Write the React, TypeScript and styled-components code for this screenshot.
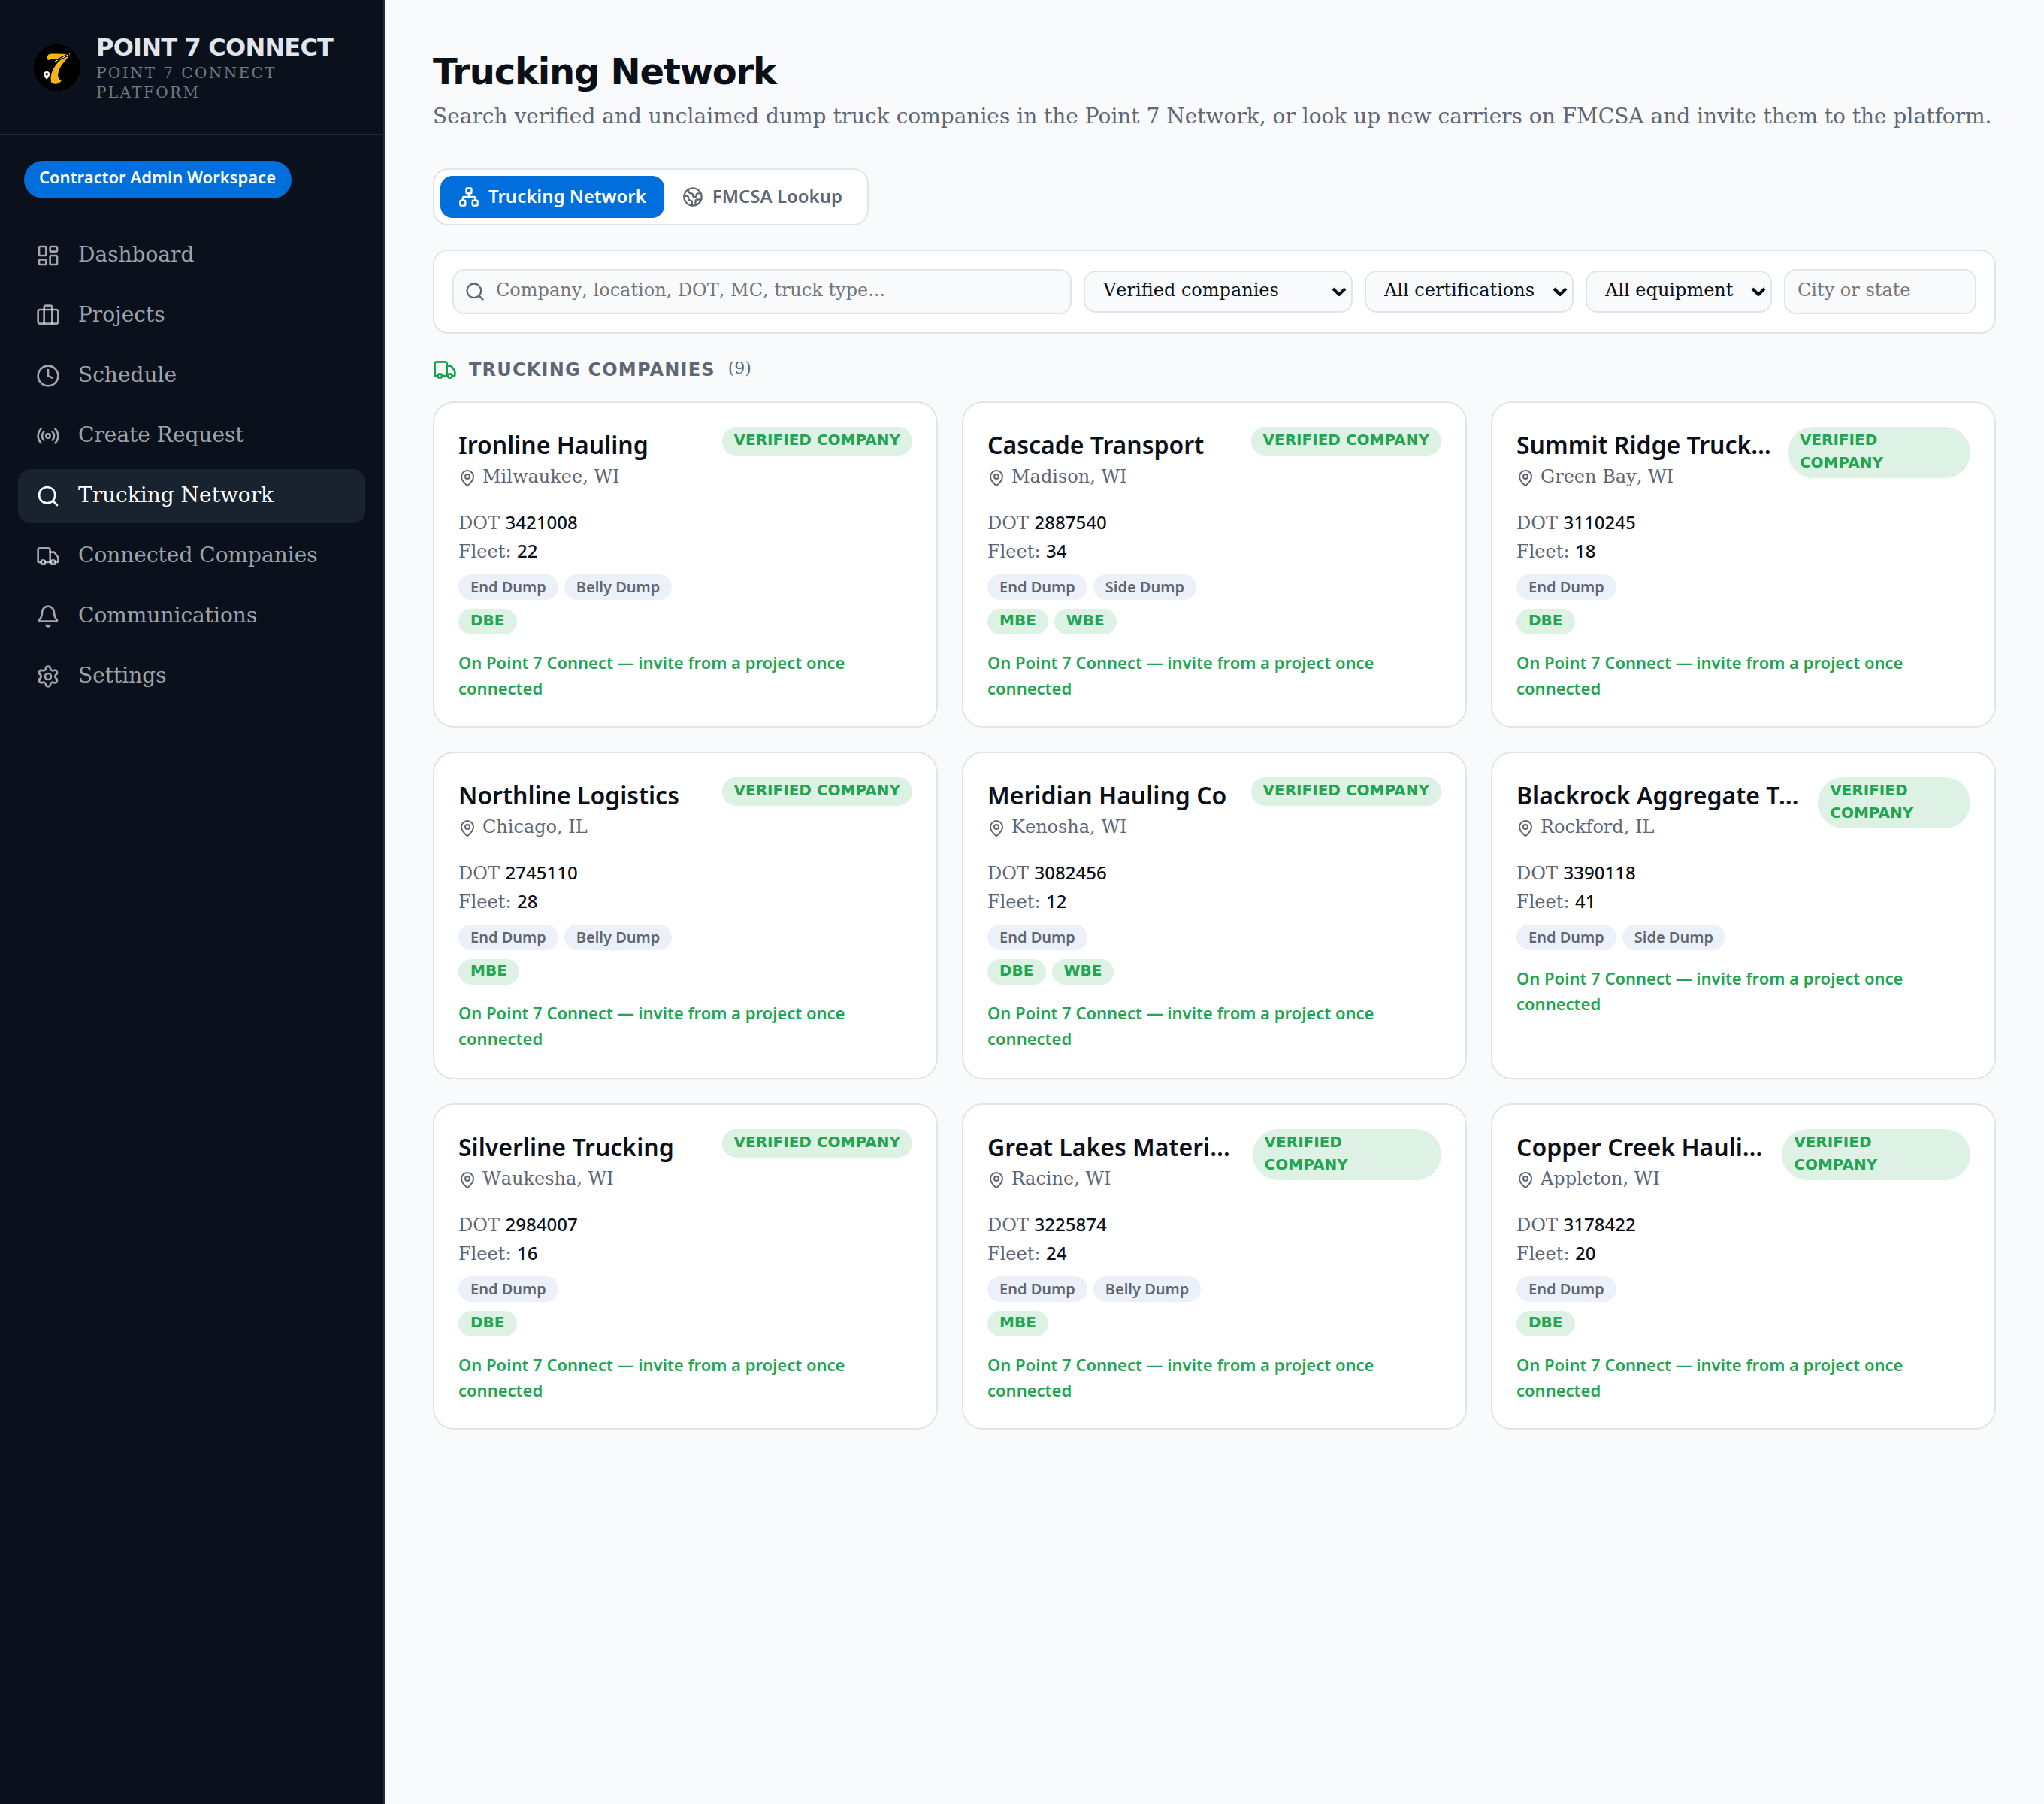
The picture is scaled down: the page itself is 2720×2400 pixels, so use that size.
import {FC} from "react";
import styled, {createGlobalStyle, css} from "styled-components";
import {
  Bell,
  Briefcase,
  Clock,
  Earth,
  LayoutDashboard,
  LucideIcon,
  MapPin,
  Network,
  Radio,
  Search,
  Settings,
  Truck,
} from "lucide-react";

interface Company {
  name: string;
  location: string;
  dot: string;
  fleet: number;
  equipment: string[];
  certifications: string[];
}

const navItems: { label: string; icon: LucideIcon }[] = [
  {label: 'Dashboard', icon: LayoutDashboard},
  {label: 'Projects', icon: Briefcase},
  {label: 'Schedule', icon: Clock},
  {label: 'Create Request', icon: Radio},
  {label: 'Trucking Network', icon: Search},
  {label: 'Connected Companies', icon: Truck},
  {label: 'Communications', icon: Bell},
  {label: 'Settings', icon: Settings},
];

const companies: Company[] = [
  {name: 'Ironline Hauling', location: 'Milwaukee, WI', dot: '3421008', fleet: 22, equipment: ['End Dump', 'Belly Dump'], certifications: ['DBE']},
  {name: 'Cascade Transport', location: 'Madison, WI', dot: '2887540', fleet: 34, equipment: ['End Dump', 'Side Dump'], certifications: ['MBE', 'WBE']},
  {name: 'Summit Ridge Trucking', location: 'Green Bay, WI', dot: '3110245', fleet: 18, equipment: ['End Dump'], certifications: ['DBE']},
  {name: 'Northline Logistics', location: 'Chicago, IL', dot: '2745110', fleet: 28, equipment: ['End Dump', 'Belly Dump'], certifications: ['MBE']},
  {name: 'Meridian Hauling Co', location: 'Kenosha, WI', dot: '3082456', fleet: 12, equipment: ['End Dump'], certifications: ['DBE', 'WBE']},
  {name: 'Blackrock Aggregate Transports', location: 'Rockford, IL', dot: '3390118', fleet: 41, equipment: ['End Dump', 'Side Dump'], certifications: []},
  {name: 'Silverline Trucking', location: 'Waukesha, WI', dot: '2984007', fleet: 16, equipment: ['End Dump'], certifications: ['DBE']},
  {name: 'Great Lakes Materials', location: 'Racine, WI', dot: '3225874', fleet: 24, equipment: ['End Dump', 'Belly Dump'], certifications: ['MBE']},
  {name: 'Copper Creek Hauling', location: 'Appleton, WI', dot: '3178422', fleet: 20, equipment: ['End Dump'], certifications: ['DBE']},
];

const Logo: FC = () => (
  <LogoSvg viewBox="0 0 72 72">
    <circle cx="36" cy="36" r="31" fill="#000"/>
    <path d="M25.500 18 C34 16.500 46 19 53.300 17.300 C52 21 49.500 23.500 46 27.700 C42 32 40 35.500 38.700 39.300 C36.500 45 36 50 41.700 53.300 C39.500 57 36 58 33 57.700 C29.500 57.500 28 56.500 27.800 53 C27.300 46 29 41 32 36 C34.500 31.500 39 27 43 23.300 C38 24.500 30 24 24.500 26 C22 25 22 19.500 25.500 18 Z" fill="#f2b619"/>
    <path d="M32 28.200 L52 18.300" stroke="#000" strokeWidth="3.200"/>
    <path d="M33.300 27.700 L51 18.800" stroke="#fff" strokeWidth="1.100" strokeDasharray="3.800 1.800"/>
    <path d="M22.200 41 a3.900 3.900 0 0 1 3.900 3.900 c0 2.900 -3.900 6.600 -3.900 6.600 s-3.900 -3.700 -3.900 -6.600 a3.900 3.900 0 0 1 3.900 -3.900 Z" fill="#fff"/>
    <circle cx="22.200" cy="44.700" r="1.700" fill="#000"/>
  </LogoSvg>
)

const CompanyCard: FC<{ company: Company }> = ({company}) => (
  <Card>
    <CardHeader>
      <CardHeading>
        <CompanyName>{company.name}</CompanyName>
        <Location><MapPin size={24}/><span>{company.location}</span></Location>
      </CardHeading>
      <StatusBadge>VERIFIED COMPANY</StatusBadge>
    </CardHeader>
    <Facts>
      <Fact>DOT <FactValue>{company.dot}</FactValue></Fact>
      <Fact>Fleet: <FactValue>{company.fleet}</FactValue></Fact>
    </Facts>
    <ChipRow>
      {company.equipment.map(item => <Chip key={item}>{item}</Chip>)}
    </ChipRow>
    {company.certifications.length > 0 && <ChipRow>
      {company.certifications.map(item => <Chip key={item} $certified>{item}</Chip>)}
    </ChipRow>}
    <Note>On Point 7 Connect — invite from a project once connected</Note>
  </Card>
)

const Select: FC<{ label: string }> = ({label}) => (
  <SelectWrap>
    <SelectInput defaultValue={label}>
      <option>{label}</option>
    </SelectInput>
    <SelectArrow viewBox="0 0 20 12">
      <path d="M2 2 L10 10 L18 2" fill="none" stroke="currentColor" strokeWidth="4"/>
    </SelectArrow>
  </SelectWrap>
)

const App: FC = () => {
  return <Layout>
    <GlobalStyle/>
    <Sidebar>
      <Brand>
        <Logo/>
        <div>
          <BrandName>POINT 7 CONNECT</BrandName>
          <BrandTagline>POINT 7 CONNECT PLATFORM</BrandTagline>
        </div>
      </Brand>
      <Workspace>Contractor Admin Workspace</Workspace>
      <Nav>
        {navItems.map(({label, icon: Icon}) => (
          <NavItem key={label} $active={label === 'Trucking Network'}>
            <Icon size={32}/>
            <NavLabel>{label}</NavLabel>
          </NavItem>
        ))}
      </Nav>
    </Sidebar>
    <Main>
      <Title>Trucking Network</Title>
      <Subtitle>Search verified and unclaimed dump truck companies in the Point 7 Network, or look up new carriers on FMCSA and invite them to the platform.</Subtitle>
      <Tabs>
        <Tab $active><Network size={28}/><span>Trucking Network</span></Tab>
        <Tab><Earth size={28}/><span>FMCSA Lookup</span></Tab>
      </Tabs>
      <Filters>
        <SearchBox>
          <Search size={28}/>
          <SearchInput placeholder="Company, location, DOT, MC, truck type..."/>
        </SearchBox>
        <Select label="Verified companies"/>
        <Select label="All certifications"/>
        <Select label="All equipment"/>
        <PlaceInput placeholder="City or state"/>
      </Filters>
      <SectionHeader>
        <Truck size={32}/>
        <SectionTitle>TRUCKING COMPANIES</SectionTitle>
        <Count>(9)</Count>
      </SectionHeader>
      <Grid>
        {companies.map(company => <CompanyCard key={company.dot} company={company}/>)}
      </Grid>
    </Main>
  </Layout>
}

const serif = css`font-family: "DejaVu Serif", serif;`
const sans = css`font-family: "Noto Sans", sans-serif;`
const bold = css`
  font-family: "DejaVu Sans", sans-serif;
  font-weight: 700;
`

const GlobalStyle = createGlobalStyle`
  * {
    box-sizing: border-box;
  }

  body {
    margin: 0;
    background: #f9fafc;
    color: #0a0f18;
    font-family: "DejaVu Serif", serif;
    font-size: 28px;
  }

  svg {
    flex-shrink: 0;
  }
`

const Layout = styled.div`
  display: flex;
  min-height: 2400px;
`

const Sidebar = styled.aside`
  display: flex;
  flex-direction: column;
  flex-shrink: 0;
  width: 512px;
  background: #0a111c;
  border-right: 2px solid #1f2937;
`

const Brand = styled.div`
  display: flex;
  align-items: center;
  gap: 16px;
  height: 180px;
  padding: 0 40px;
  border-bottom: 2px solid #1f2937;
`

const LogoSvg = styled.svg`
  width: 72px;
  height: 72px;
  margin-top: 2px;
`

const BrandName = styled.div`
  ${bold};
  font-size: 32px;
  line-height: 40px;
  letter-spacing: -0.8px;
  color: #e1e5ec;
  white-space: nowrap;
`

const BrandTagline = styled.div`
  ${serif};
  margin: 1px 0 -1px;
  font-size: 20px;
  line-height: 26px;
  letter-spacing: 2.4px;
  color: #737982;
`

const Workspace = styled.div`
  ${sans};
  align-self: flex-start;
  width: 356px;
  height: 50px;
  margin: 34px 0 0 32px;
  padding: 4px 20px 0;
  border-radius: 25px;
  background: #006fdb;
  color: #fff;
  font-size: 22px;
  font-weight: 600;
  line-height: 34px;
  white-space: nowrap;
`

const Nav = styled.nav`
  display: flex;
  flex-direction: column;
  gap: 8px;
  padding: 40px 24px;
`

const NavItem = styled.a<{ $active: boolean }>`
  display: flex;
  align-items: center;
  gap: 24px;
  height: 72px;
  padding: 0 24px;
  border-radius: 16px;
  background: ${({$active}) => $active ? '#19222f' : 'transparent'};
  color: ${({$active}) => $active ? '#fff' : 'rgba(225, 229, 236, 0.7)'};
`

const NavLabel = styled.span`
  font-size: 28px;
  line-height: 40px;
  padding-bottom: 2px;
`

const Main = styled.main`
  flex: 1;
  min-width: 0;
  padding: 64px;
`

const Title = styled.h1`
  ${bold};
  margin: 0;
  font-size: 48px;
  line-height: 62px;
  letter-spacing: -1.2px;
`

const Subtitle = styled.p`
  margin: 7px 0 0;
  font-size: 28px;
  line-height: 44px;
  color: #5f6672;
  white-space: nowrap;
`

const Tabs = styled.div`
  display: flex;
  width: fit-content;
  height: 76px;
  margin-top: 47px;
  padding: 8px 9px 8px 8px;
  border: 2px solid #e1e5eb;
  border-radius: 20px;
  background: #fff;
`

const Tab = styled.button<{ $active?: boolean }>`
  ${sans};
  display: flex;
  align-items: center;
  gap: 12px;
  padding: 0 24px;
  border: 0;
  border-radius: 16px;
  background: ${({$active}) => $active ? '#006fdb' : 'transparent'};
  color: ${({$active}) => $active ? '#fff' : '#5f6672'};
  font-size: 24px;
  font-weight: 600;

  span {
    padding-bottom: 3px;
  }
`

const Filters = styled.div`
  display: grid;
  grid-template-columns: 1fr 358px 278px 248px 256px;
  align-items: center;
  gap: 16px;
  height: 112px;
  margin-top: 32px;
  padding: 0 24px;
  border: 2px solid #e1e5eb;
  border-radius: 20px;
  background: #fff;
`

const field = css`
  border: 2px solid #e1e5eb;
  border-radius: 16px;
  background: #f9fafc;
`

const fieldText = css`
  ${serif};
  font-size: 24px;
  font-kerning: none;
  outline: none;

  &::placeholder {
    color: #757575;
  }
`

const SearchBox = styled.div`
  ${field};
  display: flex;
  align-items: center;
  gap: 14px;
  height: 60px;
  padding: 0 14px;
  color: #5f6672;
`

const SearchInput = styled.input`
  ${fieldText};
  flex: 1;
  padding: 0 0 4px;
  border: 0;
  background: transparent;
`

const PlaceInput = styled.input`
  ${field};
  ${fieldText};
  width: 100%;
  height: 60px;
  padding: 0 16px 4px;
`

const SelectWrap = styled.div`
  position: relative;
`

const SelectInput = styled.select`
  ${field};
  ${fieldText};
  appearance: none;
  display: block;
  width: 100%;
  height: 56px;
  padding: 0 24px 4px;
  color: #0a0f18;
`

const SelectArrow = styled.svg`
  position: absolute;
  right: 8px;
  top: 22px;
  width: 20px;
  height: 12px;
`

const SectionHeader = styled.div`
  display: flex;
  align-items: center;
  gap: 16px;
  height: 36px;
  margin: 30px 0 24px;
  color: #16a34a;
`

const SectionTitle = styled.h2`
  ${bold};
  margin: 0;
  font-size: 24px;
  line-height: 36px;
  letter-spacing: 1.2px;
  color: #5f6672;
`

const Count = styled.span`
  font-size: 22px;
  line-height: 32px;
  padding: 0 0 5px 1px;
  color: #5f6672;
`

const Grid = styled.div`
  display: grid;
  grid-template-columns: repeat(3, minmax(0, 1fr));
  grid-template-rows: 434px 436px 434px;
  gap: 32px;
`

const Card = styled.article`
  padding: 32px;
  border: 2px solid #e1e5eb;
  border-radius: 28px;
  background: #fff;
`

const CardHeader = styled.div`
  display: flex;
  align-items: flex-start;
  justify-content: space-between;
  gap: 16px;
  height: 88px;
`

const CardHeading = styled.div`
  min-width: 0;
`

const CompanyName = styled.div`
  ${sans};
  overflow: hidden;
  font-size: 32px;
  font-weight: 600;
  line-height: 48px;
  text-overflow: ellipsis;
  white-space: nowrap;
`

const Location = styled.div`
  display: flex;
  align-items: center;
  gap: 8px;
  height: 40px;
  font-size: 24px;
  font-kerning: none;
  line-height: 36px;
  color: #5f6672;

  span {
    padding-bottom: 4px;
  }
`

const StatusBadge = styled.span`
  ${bold};
  padding: 2px 16px 6px;
  border-radius: 34px;
  background: #ddf1e4;
  color: #22a450;
  font-size: 20px;
  line-height: 30px;
`

const Facts = styled.div`
  margin: 20px 0 12px;
`

const Fact = styled.div`
  height: 38px;
  font-size: 24px;
  line-height: 38px;
  color: #5f6672;
`

const FactValue = styled.span`
  ${sans};
  font-weight: 500;
  color: #0a0f18;
`

const ChipRow = styled.div`
  display: flex;
  gap: 8px;

  & + & {
    margin-top: 12px;
  }
`

const Chip = styled.span<{ $certified?: boolean }>`
  ${({$certified}) => $certified ? bold : sans};
  height: 34px;
  padding: 0 16px;
  border-radius: 17px;
  background: ${({$certified}) => $certified ? '#ddf1e4' : '#ecf1f9'};
  color: ${({$certified}) => $certified ? '#22a450' : '#5f6672'};
  font-size: 20px;
  font-weight: ${({$certified}) => $certified ? 700 : 600};
  line-height: ${({$certified}) => $certified ? 30 : 33}px;
`

const Note = styled.p`
  ${sans};
  margin: 20px 0 0;
  color: #22a450;
  font-size: 22px;
  font-weight: 600;
  line-height: 34px;
`

export default App;
